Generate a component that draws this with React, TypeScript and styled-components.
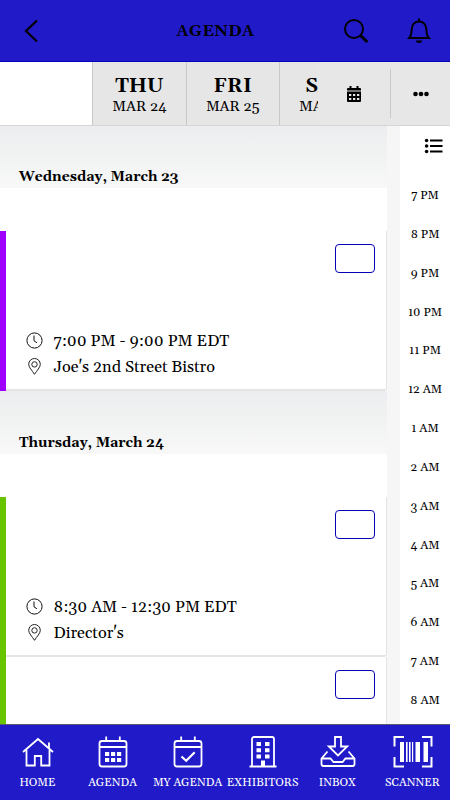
import React from "react";
import styled, { createGlobalStyle } from "styled-components";

const Global = createGlobalStyle`
  * { box-sizing: border-box; }
  body { margin: 0; background: #fff; font-family: Georgia, Gelasio, "Liberation Serif", serif; color: #000; }
`;

const Screen = styled.div`
  width: 450px;
  height: 800px;
  display: flex;
  flex-direction: column;
  overflow: hidden;
`;

const Header = styled.header`
  flex: none;
  height: 62px;
  display: grid;
  grid-template-columns: 62px 1fr 62px 63px;
  align-items: center;
  background: #201ac9;
  border-bottom: 1px solid #0500b4;
`;

const HeaderButton = styled.div`
  display: flex;
  justify-content: center;
  align-items: center;
  svg { display: block; }
`;

const Title = styled.h1`
  margin: 0;
  padding-left: 44px;
  text-align: center;
  font-size: 16px;
  line-height: 20px;
  letter-spacing: 0.4px;
`;

const DayBar = styled.nav`
  flex: none;
  height: 64px;
  display: flex;
  background: #e6e6e6;
  border-bottom: 1px solid #d5d5d6;
`;

const DayStrip = styled.div`
  width: 317.5px;
  display: flex;
  overflow: hidden;
`;

const Day = styled.div<{ $active?: boolean }>`
  flex: none;
  width: 93.3px;
  border-right: 1px solid #c9c9c9;
  background: ${(p) => (p.$active ? "#fff" : "#e6e6e6")};
  text-align: center;
  padding-top: 13px;
`;

const DayName = styled.div`
  font-size: 20px;
  line-height: 23px;
  font-weight: bold;
`;

const DayDate = styled.div`
  font-size: 14.8px;
  line-height: 18px;
`;

const DayActions = styled.div`
  flex: 1;
  display: grid;
  grid-template-columns: 72.5px 60px;
  align-items: center;
  justify-items: center;
  background: #e7e7e7;
`;

const MoreButton = styled.div`
  width: 100%;
  height: 49px;
  display: flex;
  align-items: center;
  justify-content: center;
  border-left: 1px solid #c9c9c9;
`;

const Body = styled.main`
  flex: 1;
  min-height: 0;
  display: grid;
  grid-template-columns: 387.4px 50px;
  column-gap: 12.6px;
  background: #f6f6f6;
  overflow: hidden;
`;

const List = styled.div`
  min-height: 0;
  background: #fff;
`;

const DateHeading = styled.h2<{ $height: number }>`
  margin: 0;
  height: ${(p) => p.$height}px;
  padding: ${(p) => p.$height - 21}px 0 0 19px;
  background: linear-gradient(#ecedf0, #f1f3f2 50%, #f8f8f8);
  font-size: 14px;
  line-height: 20px;
`;

const TimeSlot = styled.div`
  height: 43px;
`;

const Card = styled.article<{ $color: string }>`
  position: relative;
  height: 160px;
  border: 0 solid #e5e5e5;
  border-width: 0 1px 2px 0;
  border-bottom-right-radius: 3px;
  padding: 13px 11px 0 26px;
  &::before {
    content: "";
    position: absolute;
    left: 0;
    top: 0;
    bottom: -2px;
    width: 6px;
    background: ${(p) => p.$color};
  }
`;

const AddBox = styled.div`
  width: 40.4px;
  height: 28.5px;
  margin-left: auto;
  border: 1px solid #0500b4;
  border-radius: 4px;
`;

const Details = styled.div`
  margin-top: 55px;
`;

const Detail = styled.div`
  display: flex;
  align-items: center;
  height: 26px;
  font-size: 16.25px;
  line-height: 26px;
  white-space: nowrap;
  svg { flex: none; margin-right: 10.5px; }
`;

const DetailText = styled.span`
  padding-top: 2px;
`;

const Timeline = styled.aside`
  background: #fff;
  min-height: 0;
`;

const ListToggle = styled.div`
  height: 51px;
  padding: 12px 0 0 24.5px;
  svg { display: block; }
`;

const Hour = styled.div`
  height: 38.85px;
  line-height: 38.85px;
  text-align: center;
  font-size: 12.1px;
  white-space: nowrap;
`;

const Footer = styled.footer`
  flex: none;
  height: 76px;
  display: grid;
  grid-template-columns: repeat(6, 75px);
  background: #201ac9;
  border-top: 1px solid #5d5a70;
`;

const NavItem = styled.div`
  display: flex;
  flex-direction: column;
  align-items: center;
  padding-top: 9px;
  color: #fff;
  svg { display: block; flex: none; }
`;

const NavLabel = styled.span`
  margin-top: 4.5px;
  font-size: 11.5px;
  line-height: 16px;
  white-space: nowrap;
`;

const ClockIcon = () => (
  <svg width="17" height="17" viewBox="0 0 17 17" fill="none" stroke="#111" strokeWidth="1">
    <circle cx="8.5" cy="8.5" r="7.6" />
    <path d="M8 3.5v5.3l3 2" />
  </svg>
);

const PinIcon = () => (
  <svg width="17" height="17" viewBox="0 0 17 17" fill="none" stroke="#222" strokeWidth="1">
    <path d="M8.5 16.3C6.2 12.5 2.7 9.5 2.7 6.3a5.8 5.8 0 0 1 11.6 0c0 3.2-3.500 6.200-5.800 10z" />
    <circle cx="8.5" cy="6.4" r="2.7" />
  </svg>
);

const NavSvg = ({ children }: { children: React.ReactNode }) => (
  <svg width="42" height="36" viewBox="0 0 42 36" fill="none" stroke="#fff" strokeWidth="1.8">
    {children}
  </svg>
);

const HomeIcon = () => (
  <NavSvg>
    <path d="M6 18 21 5l15 13M32 14.500V8.500M9.500 16v15.500h8.300v-9.500h6.400v9.500h8.300V16" />
  </NavSvg>
);

const CalendarFrame = () => (
  <path d="M10 7h22a2.5 2.5 0 0 1 2.5 2.5v20.500a2.500 2.500 0 0 1-2.5 2.500H10a2.500 2.500 0 0 1-2.500-2.500V9.500A2.500 2.500 0 0 1 10 7zM7.500 13h27M14.200 2.500v5M27.800 2.500v5" />
);

const AgendaIcon = () => (
  <NavSvg>
    <CalendarFrame />
    <path d="M13 18h4.200v4H13zM19 18h4.200v4H19zM25 18h4.200v4H25zM13 24h4.200v4H13zM19 24h4.200v4H19zM25 24h4.200v4H25z" fill="#fff" stroke="none" />
  </NavSvg>
);

const MyAgendaIcon = () => (
  <NavSvg>
    <CalendarFrame />
    <path d="m14.500 22.500 4.700 4.300 8.500-8.500" strokeWidth="2.2" />
  </NavSvg>
);

const BuildingIcon = () => (
  <NavSvg>
    <path d="M7.500 32.500h27M10 32.500V5a2 2 0 0 1 2-2h18a2 2 0 0 1 2 2v27.500" />
    <path d="M14.500 8h4.500v4h-4.500zM23 8h4.500v4H23zM14.500 14.300h4.500v4h-4.500zM23 14.300h4.500v4H23zM14.500 20.500h4.500v4h-4.500zM23 20.500h4.500v4H23zM19 26.500h4v6h-4z" fill="#fff" stroke="none" />
  </NavSvg>
);

const InboxIcon = () => (
  <NavSvg>
    <path d="M18 3h6v9.500h6.200L21 21.500 11.800 12.500H18zM10.500 17.500l-6 7V30a2 2 0 0 0 2 2h29a2 2 0 0 0 2-2v-5.500l-6-7M4.500 24.500h9l3 3.500h9l3-3.500h9" />
  </NavSvg>
);

const ScannerIcon = () => (
  <NavSvg>
    <path d="M12 3H2.500v9.500M30 3h9.500v9.500M12 32.500H2.500V23M30 32.500h9.500V23" strokeWidth="2" />
    <path d="M8 8h4v20H8zM14 8h1.600v20H14zM17 8h1.600v20H17zM20 8h1.200v20H20zM23.500 8h4.500v20h-4.500zM31.500 8h4.500v20h-4.500z" fill="#fff" stroke="none" />
  </NavSvg>
);

const days = [
  { name: "THU", date: "MAR 24" },
  { name: "FRI", date: "MAR 25" },
  { name: "SAT", date: "MAR 26" },
];

const hours = ["7 PM", "8 PM", "9 PM", "10 PM", "11 PM", "12 AM", "1 AM", "2 AM", "3 AM", "4 AM", "5 AM", "6 AM", "7 AM", "8 AM"];

const navItems = [
  { label: "HOME", icon: <HomeIcon /> },
  { label: "AGENDA", icon: <AgendaIcon /> },
  { label: "MY AGENDA", icon: <MyAgendaIcon /> },
  { label: "EXHIBITORS", icon: <BuildingIcon /> },
  { label: "INBOX", icon: <InboxIcon /> },
  { label: "SCANNER", icon: <ScannerIcon /> },
];

const Session = ({ color, time, place }: { color: string; time?: string; place?: string }) => (
  <Card $color={color}>
    <AddBox />
    {time && (
      <Details>
        <Detail><ClockIcon /><DetailText>{time}</DetailText></Detail>
        <Detail><PinIcon /><DetailText>{place}</DetailText></Detail>
      </Details>
    )}
  </Card>
);

export default function App() {
  return (
    <Screen>
      <Global />
      <Header>
        <HeaderButton>
          <svg width="16" height="24" viewBox="0 0 16 24" fill="none" stroke="#000" strokeWidth="2.2">
            <path d="M14 1.500 3 12l11 10.500" />
          </svg>
        </HeaderButton>
        <Title>AGENDA</Title>
        <HeaderButton>
          <svg width="26" height="26" viewBox="0 0 26 26" fill="none" stroke="#000" strokeWidth="2">
            <circle cx="11" cy="11" r="9" />
            <path d="m17.500 17.500 6.800 6.500" strokeWidth="3" />
          </svg>
        </HeaderButton>
        <HeaderButton>
          <svg width="24" height="26" viewBox="0 0 24 26" fill="none" stroke="#000" strokeWidth="2">
            <path d="M12 .5v3M2.200 20c2-2 2.300-4 2.500-9C5 6.500 8 3.500 12 3.500s7 3 7.300 7.500c.2 5 .5 7 2.500 9z" />
            <path d="M9 22.500h6a3 2.500 0 0 1-6 0z" fill="#000" stroke="none" />
          </svg>
        </HeaderButton>
      </Header>
      <DayBar>
        <DayStrip>
          <Day $active />
          {days.map((d) => (
            <Day key={d.name}>
              <DayName>{d.name}</DayName>
              <DayDate>{d.date}</DayDate>
            </Day>
          ))}
        </DayStrip>
        <DayActions>
          <svg width="16" height="18" viewBox="0 0 16 18">
            <path fillRule="evenodd" d="M3.500 1h2v2h5V1h2v2H14a1 1 0 0 1 1 1v1.500H1V4a1 1 0 0 1 1-1h1.500zM1 6.500h14V16a1 1 0 0 1-1 1H2a1 1 0 0 1-1-1zM3 9v2h2.300V9zM7 9v2h2.300V9zM11 9v2h2.300V9zM3 13v2h2.300v-2zM7 13v2h2.300v-2zM11 13v2h2.300v-2z" />
          </svg>
          <MoreButton>
            <svg width="16" height="6" viewBox="0 0 16 6">
              <circle cx="2.500" cy="3" r="2.300" />
              <circle cx="8" cy="3" r="2.300" />
              <circle cx="13.500" cy="3" r="2.300" />
            </svg>
          </MoreButton>
        </DayActions>
      </DayBar>
      <Body>
        <List>
          <DateHeading $height={62}>Wednesday, March 23</DateHeading>
          <TimeSlot />
          <Session color="#9d00ff" time="7:00 PM - 9:00 PM EDT" place="Joe's 2nd Street Bistro" />
          <DateHeading $height={63}>Thursday, March 24</DateHeading>
          <TimeSlot />
          <Session color="#68c300" time="8:30 AM - 12:30 PM EDT" place="Director's" />
          <Session color="#68c300" />
        </List>
        <Timeline>
          <ListToggle>
            <svg width="19" height="16" viewBox="0 0 19 16">
              <circle cx="2.600" cy="2.500" r="1.800" />
              <circle cx="2.600" cy="8" r="1.800" />
              <circle cx="2.600" cy="13.500" r="1.800" />
              <path d="M6 1.500h12.500v2H6zM6 7h12.500v2H6zM6 12.500h12.500v2H6z" />
            </svg>
          </ListToggle>
          {hours.map((h) => <Hour key={h}>{h}</Hour>)}
        </Timeline>
      </Body>
      <Footer>
        {navItems.map((n) => (
          <NavItem key={n.label}>
            {n.icon}
            <NavLabel>{n.label}</NavLabel>
          </NavItem>
        ))}
      </Footer>
    </Screen>
  );
}
